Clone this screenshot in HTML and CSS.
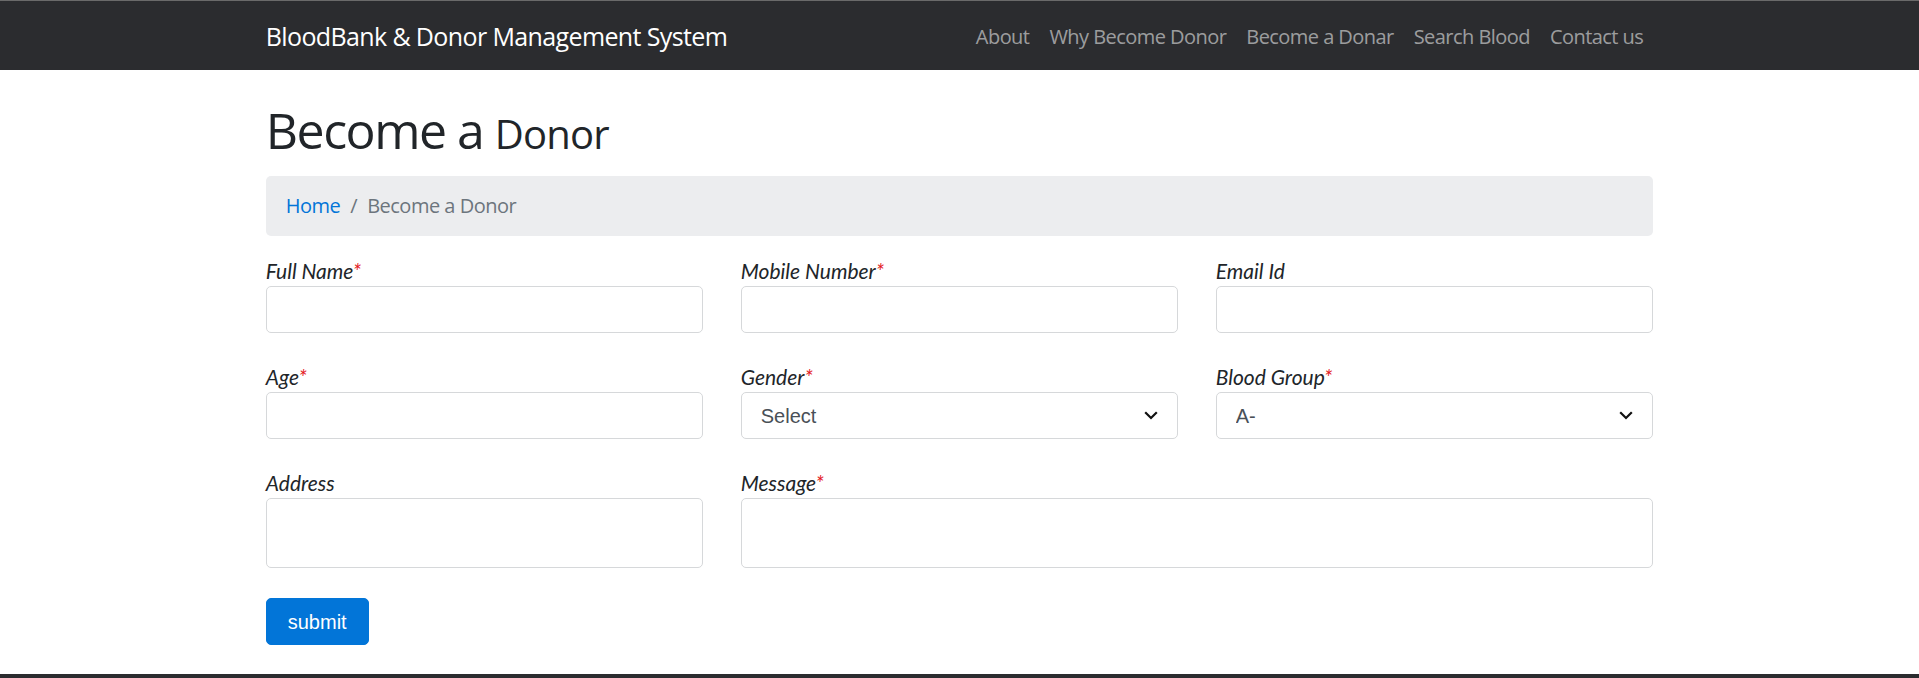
FILE: index.html
```html
<!DOCTYPE html>
<html lang="en">
<head>
<meta charset="utf-8">
<title>BloodBank &amp; Donor Management System</title>
<link rel="stylesheet" href="styles.css">
</head>
<body>
<nav class="navbar">
  <div class="container nav-inner">
    <a class="brand" href="#">BloodBank &amp; Donor Management System</a>
    <ul class="nav-links">
      <li><a href="#">About</a></li>
      <li><a href="#">Why Become Donor</a></li>
      <li><a href="#">Become a Donar</a></li>
      <li><a href="#">Search Blood</a></li>
      <li><a href="#">Contact us</a></li>
    </ul>
  </div>
</nav>

<main class="container">
  <h1 class="page-title">Become a <small>Donor</small></h1>
  <ol class="breadcrumb">
    <li class="crumb"><a href="#">Home</a></li>
    <li class="crumb active">Become a Donor</li>
  </ol>

  <form class="donor-form">
    <div class="field">
      <div class="label">Full Name<span class="req">*</span></div>
      <input class="control" type="text">
    </div>
    <div class="field">
      <div class="label">Mobile Number<span class="req">*</span></div>
      <input class="control" type="text">
    </div>
    <div class="field">
      <div class="label">Email Id</div>
      <input class="control" type="email">
    </div>

    <div class="field">
      <div class="label">Age<span class="req">*</span></div>
      <input class="control" type="text">
    </div>
    <div class="field">
      <div class="label">Gender<span class="req">*</span></div>
      <div class="select-wrap">
        <select class="control select">
          <option>Select</option>
          <option>Male</option>
          <option>Female</option>
        </select>
        <svg class="chevron" width="14" height="9" viewBox="0 0 14 9"><path d="M1.2 1.2 L7 7 L12.8 1.2" fill="none" stroke="#111" stroke-width="2.2"/></svg>
      </div>
    </div>
    <div class="field">
      <div class="label">Blood Group<span class="req">*</span></div>
      <div class="select-wrap">
        <select class="control select">
          <option>A-</option>
          <option>A+</option>
          <option>B-</option>
          <option>B+</option>
        </select>
        <svg class="chevron" width="14" height="9" viewBox="0 0 14 9"><path d="M1.2 1.2 L7 7 L12.8 1.2" fill="none" stroke="#111" stroke-width="2.2"/></svg>
      </div>
    </div>

    <div class="field">
      <div class="label">Address</div>
      <textarea class="control area"></textarea>
    </div>
    <div class="field wide">
      <div class="label">Message<span class="req">*</span></div>
      <textarea class="control area"></textarea>
    </div>

    <div class="field">
      <button class="btn" type="button">submit</button>
    </div>
  </form>
</main>

<footer class="footer"></footer>
</body>
</html>
```

FILE: styles.css
```css
* { box-sizing: border-box; }

html, body {
  margin: 0;
  padding: 0;
}

body {
  font-family: "Open Sans", "Liberation Sans", sans-serif;
  font-size: 20px;
  line-height: 1.5;
  color: #212529;
  background: #fff;
  overflow: hidden;
}

a { text-decoration: none; }

.container {
  max-width: 1425px;
  margin: 0 auto;
  padding: 0 18.75px;
}

/* navbar */
.navbar {
  height: 70px;
  background: #2b2c2f;
  border-top: 1px solid #6a6a6a;
}

.nav-inner {
  height: 100%;
  padding-top: 2px;
  display: flex;
  align-items: center;
  justify-content: space-between;
}

.brand {
  color: #fff;
  font-size: 25px;
  line-height: 37.5px;
  letter-spacing: -0.62px;
}

.nav-links {
  list-style: none;
  margin: 0;
  padding: 0;
  display: flex;
}

.nav-links a {
  display: block;
  padding: 0 10px;
  color: rgba(255, 255, 255, 0.55);
  font-size: 20px;
  line-height: 30px;
  letter-spacing: -0.55px;
}

/* heading */
.page-title {
  margin: 30px 0 12px;
  font-size: 50px;
  font-weight: 400;
  line-height: 60px;
  letter-spacing: -1.5px;
}

.page-title small {
  font-size: 80%;
  font-weight: 400;
  letter-spacing: -0.8px;
}

/* breadcrumb */
.breadcrumb {
  list-style: none;
  margin: 0 0 20px;
  padding: 15px 20px;
  height: 60px;
  display: flex;
  background: #ecedef;
  border-radius: 5px;
  letter-spacing: -0.5px;
}

.crumb a { color: #0275d8; }

.crumb.active { color: #6c757d; }

.crumb + .crumb::before {
  content: "/";
  color: #6c757d;
  padding: 0 10px;
}

/* form */
.donor-form {
  display: grid;
  grid-template-columns: repeat(3, 1fr);
  column-gap: 37.5px;
  row-gap: 29px;
}

.field.wide { grid-column: span 2; }

.label {
  font-family: "Lato", "Open Sans", sans-serif;
  font-style: italic;
  font-size: 21px;
  line-height: 30px;
  color: #212529;
}

.req { color: #e3161b; }

.control {
  display: block;
  width: 100%;
  height: 47px;
  margin: 0;
  padding: 7.5px 15px;
  font-family: "Liberation Sans", Arial, sans-serif;
  font-size: 20px;
  line-height: 30px;
  color: #495057;
  background: #fff;
  border: 1px solid #d6d8da;
  border-radius: 5px;
  outline: none;
}

.select-wrap { position: relative; }

.select {
  -webkit-appearance: none;
  appearance: none;
  padding-left: 19px;
  padding-right: 40px;
}

.chevron {
  position: absolute;
  right: 20px;
  top: 19px;
  pointer-events: none;
}

.area {
  height: 70px;
  resize: none;
}

.btn {
  display: block;
  height: 47px;
  margin-top: 1px;
  padding: 0 21px;
  font-family: "Liberation Sans", Arial, sans-serif;
  font-size: 20px;
  line-height: 30px;
  color: #fff;
  background: #0275d8;
  border: 1px solid #0275d8;
  border-radius: 5px;
}

.footer {
  margin-top: 29px;
  height: 200px;
  background: #2b2c2f;
}
```
